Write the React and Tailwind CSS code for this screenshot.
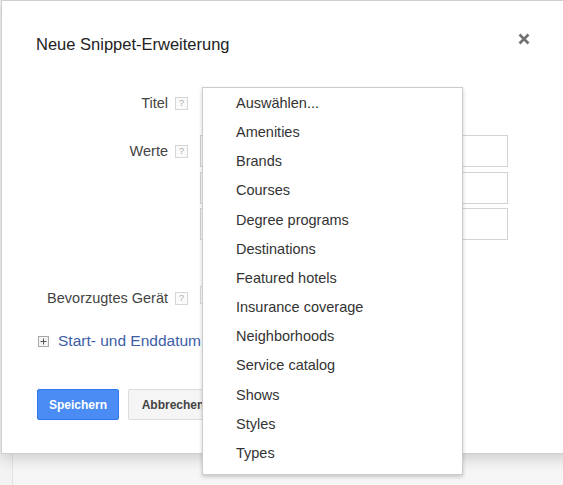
import React from 'react';

const OPTIONS = [
  'Auswählen...',
  'Amenities',
  'Brands',
  'Courses',
  'Degree programs',
  'Destinations',
  'Featured hotels',
  'Insurance coverage',
  'Neighborhoods',
  'Service catalog',
  'Shows',
  'Styles',
  'Types',
];

const Help = () => (
  <span className="ml-[7px] flex h-[13px] w-[13px] items-center justify-center border border-[#d6d6d6] bg-[#fafafa] text-[9px] leading-none text-[#aaa]">
    ?
  </span>
);

const Row = ({ label, children, className = '' }) => (
  <div className={`grid grid-cols-[166px_32px_308px] ${className}`}>
    <div className="text-right text-[14.5px] leading-[32px] text-[#444]">{label}</div>
    <div className="flex h-[32px] items-center">
      <Help />
    </div>
    <div className="flex flex-col gap-[4px]">{children}</div>
  </div>
);

const App = () => {
  return (
    <div
      className="relative h-[485px] w-[563px] overflow-hidden bg-[#f3f3f3]"
      style={{ fontFamily: '"Liberation Sans", Arial, sans-serif' }}
    >
      {/* Dialog */}
      <div className="relative z-10 ml-[1px] h-[454px] w-[600px] border border-[#cfcfcf] bg-white shadow-[0_4px_14px_rgba(0,0,0,0.18)]">
        <div className="flex h-[86px] items-start justify-between pt-[33px] pl-[34px] pr-[70px]">
          <h1 className="text-[16.5px] leading-[20px] text-[#222]">Neue Snippet-Erweiterung</h1>
          <svg width="12" height="12" viewBox="0 0 12 12" className="-mt-[1px]">
            <path d="M1.5 1.5 L10.5 10.5 M10.5 1.5 L1.5 10.5" stroke="#707070" strokeWidth="2.6" />
          </svg>
        </div>

        <Row label="Titel">
          <div className="h-[32px] w-[263px]" />
        </Row>

        <Row label="Werte" className="mt-[16px]">
          <div className="h-[32px] border border-[#d3d3d3]" />
          <div className="mt-[1px] h-[32px] border border-[#d3d3d3]" />
          <div className="h-[32px] border border-[#d3d3d3]" />
        </Row>

        <Row label="Bevorzugtes Gerät" className="mt-[42px]">
          <div className="mt-[4px] h-[18px] w-[150px] border border-[#dddddd]" />
        </Row>

        <div className="mt-[17px] flex h-[20px] items-center pl-[36px]">
          <span className="flex h-[11px] w-[11px] items-center justify-center border border-[#a8a8a8] bg-[#f4f4f4]">
            <svg width="7" height="7" viewBox="0 0 7 7">
              <path d="M3.5 0.5 V6.5 M0.5 3.5 H6.5" stroke="#555" strokeWidth="1" />
            </svg>
          </span>
          <span className="ml-[9px] text-[15.5px] text-[#3d5ea6]">Start- und Enddatum</span>
        </div>

        <div className="mt-[38px] flex gap-[9px] pl-[35px]">
          <button className="h-[31px] w-[82px] rounded-[2px] border border-[#3079ed] bg-[#4a8cf3] text-[12px] font-bold text-white">
            Speichern
          </button>
          <button className="h-[31px] w-[90px] rounded-[2px] border border-[#dcdcdc] bg-[#f5f5f5] text-[12px] font-bold text-[#444]">
            Abbrechen
          </button>
        </div>
      </div>

      {/* page behind */}
      <div className="ml-[12px] h-full border-l border-[#e2e2e2] bg-[#f6f6f6]" />

      {/* Open dropdown menu */}
      <div className="absolute left-[202px] top-[87px] z-20 h-[388px] w-[261px] border border-[#cccccc] bg-white pt-[1px] shadow-[0_2px_4px_rgba(0,0,0,0.2)]">
        {OPTIONS.map((o) => (
          <div key={o} className="h-[29.17px] pl-[33px] text-[14.5px] leading-[29px] text-[#333]">
            {o}
          </div>
        ))}
      </div>
    </div>
  );
};

export default App;
